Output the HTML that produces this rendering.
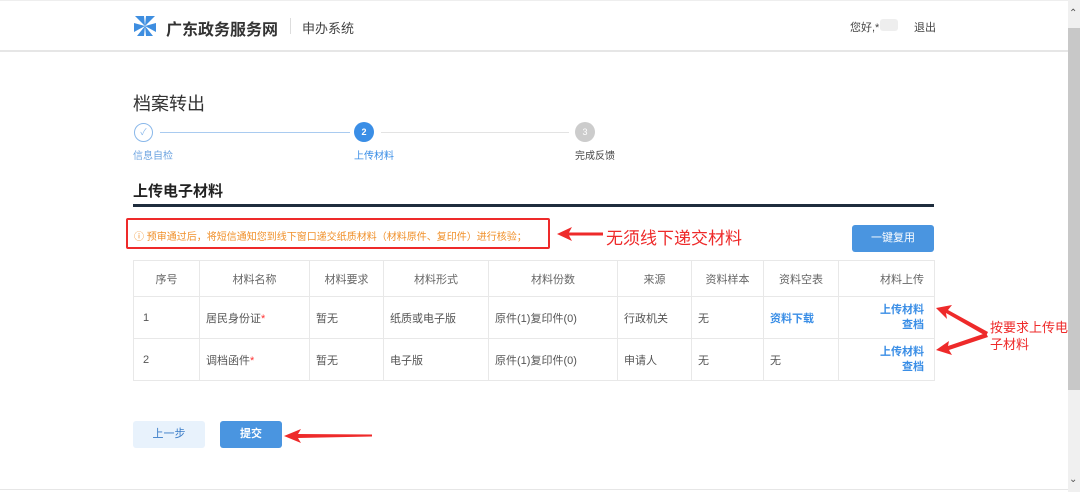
<!DOCTYPE html>
<html><head><meta charset="utf-8"><style>
*{margin:0;padding:0;box-sizing:border-box}
body{width:1080px;height:492px;overflow:hidden;background:#fff;font-family:"Liberation Sans","Noto Sans CJK SC",sans-serif;position:relative;color:#333}
.a{position:absolute;white-space:nowrap}
table{position:absolute;left:133px;top:260px;border-collapse:collapse;font-size:11px;color:#555}
td{border:1px solid #e8e8e8;padding:0 6px}
tr.h td{height:36px;text-align:center;color:#666}
tr.r td{height:42px}
.lk{color:#3a8ee6}
.st{color:#f33}
</style></head><body>
<div class="a" style="left:0;top:0;width:1068px;height:52px;border-bottom:2px solid #e6e6e6;border-top:1px solid #eee"></div>
<svg class="a" style="left:133px;top:15px" width="24" height="22" viewBox="0 0 24 22"><g fill="#3e8ee0"><path d="M12 11 L2 1 L11 1Z"/><path d="M12 11 L22 1 L13 1Z"/><path d="M12 11 L1 8 L1 17Z"/><path d="M12 11 L23 8 L23 17Z"/><path d="M12 11 L4 21 L11 21Z"/><path d="M12 11 L20 21 L13 21Z"/></g></svg>
<div class="a" style="left:166px;top:16px;font-size:16px;font-weight:bold;color:#333">广东政务服务网</div>
<div class="a" style="left:290px;top:18px;width:1px;height:16px;background:#ddd"></div>
<div class="a" style="left:302px;top:18px;font-size:13px;color:#444">申办系统</div>
<div class="a" style="left:850px;top:19px;font-size:11px;color:#444">您好,*</div>
<div class="a" style="left:880px;top:19px;width:18px;height:12px;background:#eee;border-radius:3px"></div>
<div class="a" style="left:914px;top:19px;font-size:11px;color:#444">退出</div>
<div class="a" style="left:1068px;top:0;width:12px;height:492px;background:#f0f0f0"></div>
<div class="a" style="left:1068px;top:28px;width:12px;height:362px;background:#c8c8c8"></div>
<div class="a" style="left:1069px;top:8px;font-size:10px;color:#555">&#8963;</div>
<div class="a" style="left:1069px;top:474px;font-size:10px;color:#555">&#8964;</div>
<div class="a" style="left:0;top:489px;width:1068px;height:1px;background:#e6e6e6"></div>

<div class="a" style="left:133px;top:90px;font-size:18px;color:#333">档案转出</div>
<div class="a" style="left:134px;top:123px;width:19px;height:19px;border:1px solid #8ab8ea;border-radius:50%;font-size:9px;color:#8ab8ea;text-align:center;line-height:17px">✓</div>
<div class="a" style="left:160px;top:132px;width:190px;height:1px;background:#a9cbf0"></div>
<div class="a" style="left:354px;top:122px;width:20px;height:20px;background:#3a8ee6;border-radius:50%;font-size:9px;color:#fff;text-align:center;line-height:20px;font-weight:bold">2</div>
<div class="a" style="left:381px;top:132px;width:188px;height:1px;background:#e3e3e3"></div>
<div class="a" style="left:575px;top:122px;width:20px;height:20px;background:#ccc;border-radius:50%;font-size:9px;color:#fff;text-align:center;line-height:20px">3</div>
<div class="a" style="left:133px;top:147px;font-size:10px;color:#6fa5e0">信息自检</div>
<div class="a" style="left:354px;top:147px;font-size:10px;color:#3a8ee6">上传材料</div>
<div class="a" style="left:575px;top:147px;font-size:10px;color:#444">完成反馈</div>

<div class="a" style="left:133px;top:180px;font-size:15px;font-weight:bold;color:#222">上传电子材料</div>
<div class="a" style="left:133px;top:204px;width:801px;height:3px;background:#1f2d3d"></div>

<div class="a" style="left:126px;top:218px;width:424px;height:31px;border:2px solid #ee2a2a;border-radius:2px"></div>
<div class="a" style="left:134px;top:228px;font-size:10px;color:#f0902a">ⓘ 预审通过后，将短信通知您到线下窗口递交纸质材料（材料原件、复印件）进行核验；</div>
<svg class="a" style="left:555px;top:226px" width="50" height="16"><path d="M2 8 L17 1 L14 6.5 L48 6.5 L48 9.5 L14 9.5 L17 15Z" fill="#ee2a2a"/></svg>
<div class="a" style="left:606px;top:224px;font-size:17px;color:#ee2a2a">无须线下递交材料</div>
<div class="a" style="left:852px;top:225px;width:82px;height:27px;background:#4a95e0;border-radius:3px;color:#fff;font-size:11px;text-align:center;line-height:27px">一键复用</div>

<table>
<colgroup><col style="width:66px"><col style="width:110px"><col style="width:74px"><col style="width:105px"><col style="width:129px"><col style="width:74px"><col style="width:72px"><col style="width:75px"><col style="width:96px"></colgroup>
<tr class="h"><td>序号</td><td>材料名称</td><td>材料要求</td><td>材料形式</td><td>材料份数</td><td>来源</td><td>资料样本</td><td>资料空表</td><td style="text-align:right;padding-right:10px">材料上传</td></tr>
<tr class="r"><td>&nbsp;1</td><td>居民身份证<span class="st">*</span></td><td>暂无</td><td>纸质或电子版</td><td>原件(1)复印件(0)</td><td>行政机关</td><td>无</td><td class="lk" style="font-weight:bold">资料下载</td><td class="lk" style="text-align:right;padding-right:10px;font-weight:bold;line-height:15px">上传材料<br>查档</td></tr>
<tr class="r"><td>&nbsp;2</td><td>调档函件<span class="st">*</span></td><td>暂无</td><td>电子版</td><td>原件(1)复印件(0)</td><td>申请人</td><td>无</td><td>无</td><td class="lk" style="text-align:right;padding-right:10px;font-weight:bold;line-height:15px">上传材料<br>查档</td></tr>
</table>

<svg class="a" style="left:930px;top:300px" width="60" height="60"><path d="M6 8 L22 5 L18 10 L58 32 L56 36 L16 13 L17 19Z" fill="#ee2a2a"/><path d="M6 50 L19 41 L18 46 L56 33 L58 37 L19 50 L22 55Z" fill="#ee2a2a"/></svg>
<div class="a" style="left:990px;top:319px;font-size:13px;color:#ee2a2a;line-height:17px">按要求上传电<br>子材料</div>

<div class="a" style="left:133px;top:421px;width:72px;height:27px;background:#e8f2fc;border-radius:3px;color:#3a7cc7;font-size:11px;text-align:center;line-height:27px">上一步</div>
<div class="a" style="left:220px;top:421px;width:62px;height:27px;background:#4a95e0;border-radius:3px;color:#fff;font-size:11px;text-align:center;line-height:27px;font-weight:bold">提交</div>
<svg class="a" style="left:282px;top:428px" width="92" height="16"><path d="M2 8 L19 1 L16 6 L90 6.5 L90 8.5 L16 10 L19 15Z" fill="#ee2a2a"/></svg>
</body></html>
